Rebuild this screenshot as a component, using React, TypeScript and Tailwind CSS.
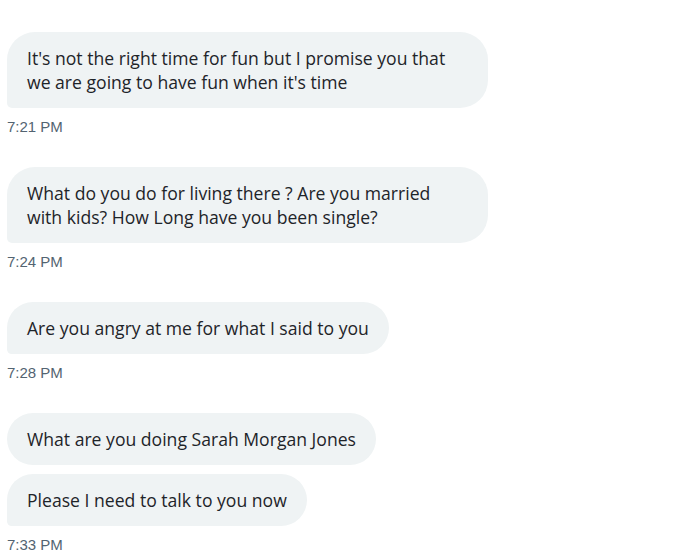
import React from 'react'

type Msg = { lines: string[] }
type Group = { messages: Msg[]; time: string }

const groups: Group[] = [
  {
    messages: [
      {
        lines: [
          "It's not the right time for fun but I promise you that",
          "we are going to have fun when it's time",
        ],
      },
    ],
    time: '7:21 PM',
  },
  {
    messages: [
      {
        lines: [
          'What do you do for living there ? Are you married',
          'with kids? How Long have you been single?',
        ],
      },
    ],
    time: '7:24 PM',
  },
  {
    messages: [{ lines: ['Are you angry at me for what I said to you'] }],
    time: '7:28 PM',
  },
  {
    messages: [
      { lines: ['What are you doing Sarah Morgan Jones'] },
      { lines: ['Please I need to talk to you now'] },
    ],
    time: '7:33 PM',
  },
]

export default function App() {
  return (
    <div className="h-[559px] w-[693px] overflow-hidden bg-white pl-[7px] pt-[32px]">
      <div className="flex flex-col gap-[30px]">
        {groups.map((g) => (
          <div key={g.time} className="flex flex-col items-start">
            <div className="flex flex-col items-start gap-[9px]">
              {g.messages.map((m, i) => {
                const last = i === g.messages.length - 1
                return (
                  <div
                    key={i}
                    className={`bg-[#eff3f4] px-[20px] py-[14px] font-['Open_Sans',sans-serif] text-[17.6px] leading-[24px] text-[#1e2429] ${
                      m.lines.length > 1 ? 'w-[481px]' : ''
                    } ${last ? 'rounded-[28px] rounded-bl-[5px]' : 'rounded-[28px]'}`}
                  >
                    {m.lines.map((l, j) => (
                      <div key={j} className="whitespace-nowrap">
                        {l}
                      </div>
                    ))}
                  </div>
                )
              })}
            </div>
            <div className="mt-[9px] font-['Liberation_Sans',Arial,sans-serif] text-[15px] leading-[20px] text-[#536471]">
              {g.time}
            </div>
          </div>
        ))}
      </div>
    </div>
  )
}
